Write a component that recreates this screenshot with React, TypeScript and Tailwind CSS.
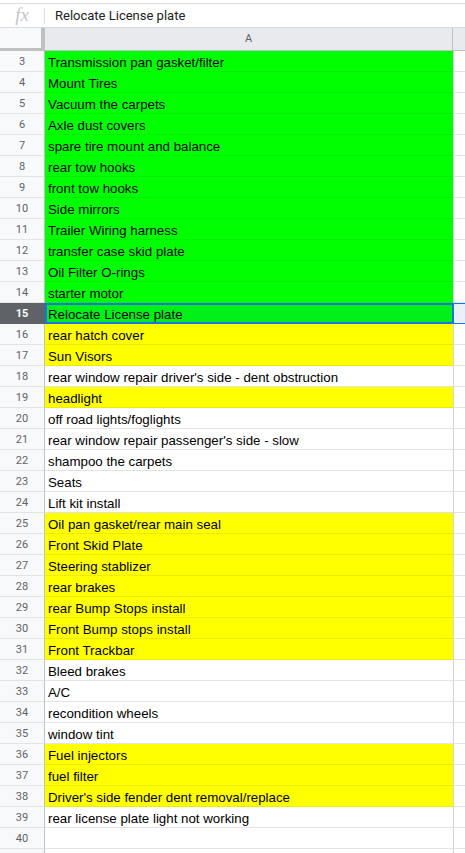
import React from "react";

type Fill = "g" | "y" | "w";

const rows: [number, string, Fill][] = [
  [3, "Transmission pan gasket/filter", "g"],
  [4, "Mount Tires", "g"],
  [5, "Vacuum the carpets", "g"],
  [6, "Axle dust covers", "g"],
  [7, "spare tire mount and balance", "g"],
  [8, "rear tow hooks", "g"],
  [9, "front tow hooks", "g"],
  [10, "Side mirrors", "g"],
  [11, "Trailer Wiring harness", "g"],
  [12, "transfer case skid plate", "g"],
  [13, "Oil Filter O-rings", "g"],
  [14, "starter motor", "g"],
  [15, "Relocate License plate", "g"],
  [16, "rear hatch cover", "y"],
  [17, "Sun Visors", "y"],
  [18, "rear window repair driver's side - dent obstruction", "w"],
  [19, "headlight", "y"],
  [20, "off road lights/foglights", "w"],
  [21, "rear window repair passenger's side - slow", "w"],
  [22, "shampoo the carpets", "w"],
  [23, "Seats", "w"],
  [24, "Lift kit install", "w"],
  [25, "Oil pan gasket/rear main seal", "y"],
  [26, "Front Skid Plate", "y"],
  [27, "Steering stablizer", "y"],
  [28, "rear brakes", "y"],
  [29, "rear Bump Stops install", "y"],
  [30, "Front Bump stops install", "y"],
  [31, "Front Trackbar", "y"],
  [32, "Bleed brakes", "w"],
  [33, "A/C", "w"],
  [34, "recondition wheels", "w"],
  [35, "window tint", "w"],
  [36, "Fuel injectors", "y"],
  [37, "fuel filter", "y"],
  [38, "Driver's side fender dent removal/replace", "y"],
  [39, "rear license plate light not working", "w"],
  [40, "", "w"],
];

const ACTIVE = 15;

function cellClass(fill: Fill, active: boolean) {
  if (active) return "bg-[#01f018] border-black/[0.06]";
  if (fill === "g") return "bg-[#00ff00] border-black/[0.06]";
  if (fill === "y") return "bg-[#ffff00] border-black/[0.07]";
  return "bg-white border-[#e2e3e3]";
}

export default function App() {
  return (
    <div className="w-[465px] h-[853px] overflow-hidden bg-white font-['Liberation_Sans',Arial,sans-serif]">
      <div className="h-[3px]" />

      {/* Formula bar */}
      <div className="h-[25px] border-y border-[#dadce0] flex items-center">
        <div className="w-[44px] flex justify-center">
          <span className="font-['Liberation_Serif',serif] italic text-[19px] leading-none text-[#c5c6c8] -mt-[2px]">
            fx
          </span>
        </div>
        <div className="h-[16px] w-px bg-[#dadce0]" />
        <span className="ml-[10px] text-[13px] text-[#202124] font-['Roboto',sans-serif]">
          Relocate License plate
        </span>
      </div>

      {/* Column header row */}
      <div className="flex h-[23px]">
        <div className="w-[45px] shrink-0 bg-[#f8f9fa] border-r-4 border-b-[3px] border-[#c0c0c0]" />
        <div className="w-[408px] shrink-0 bg-[#e8eaed] border-r border-b border-[#c0c0c0] flex items-center justify-center text-[11px] text-[#5f6368] font-['Roboto',sans-serif]">
          A
        </div>
        <div className="flex-1 bg-[#e8eaed] border-b border-[#c0c0c0]" />
      </div>

      {/* Rows */}
      {rows.map(([n, text, fill]) => {
        const active = n === ACTIVE;
        return (
          <div key={n} className="flex h-[21px]">
            <div
              className={
                active
                  ? "w-[45px] shrink-0 bg-[#5f6368] border-r border-b border-[#5f6368] flex items-center justify-center pt-[2px] text-[11px] font-bold text-white font-['Roboto',sans-serif]"
                  : "w-[45px] shrink-0 bg-[#f8f9fa] border-r border-r-[#c0c0c0] border-b border-b-[#e2e3e3] flex items-center justify-center pt-[2px] text-[11px] text-[#5f6368] font-['Roboto',sans-serif]"
              }
            >
              {n}
            </div>
            <div
              className={`relative w-[408px] shrink-0 border-b border-r-0 pl-[3px] flex items-center text-[13.3px] leading-none text-black whitespace-nowrap ${cellClass(fill, active)}`}
            >
              <span className="pt-[3px]">{text}</span>
              {active && (
                <div className="absolute left-0 top-0 -bottom-[1px] -right-[1px] border-2 border-[#1a73e8]" />
              )}
            </div>
            <div
              className={
                active
                  ? "flex-1 bg-[#e8f0fe] border-t border-b border-[#1a73e8]"
                  : "flex-1 border-l border-l-[#c0c0c0]/70 border-b border-b-[#e2e3e3]"
              }
            />
          </div>
        );
      })}

      {/* Partially visible row 41 */}
      <div className="flex h-[21px]">
        <div className="w-[45px] shrink-0 bg-[#f8f9fa] border-r border-[#c0c0c0]" />
        <div className="w-[408px] shrink-0" />
        <div className="flex-1 border-l border-l-[#c0c0c0]/70" />
      </div>
    </div>
  );
}
